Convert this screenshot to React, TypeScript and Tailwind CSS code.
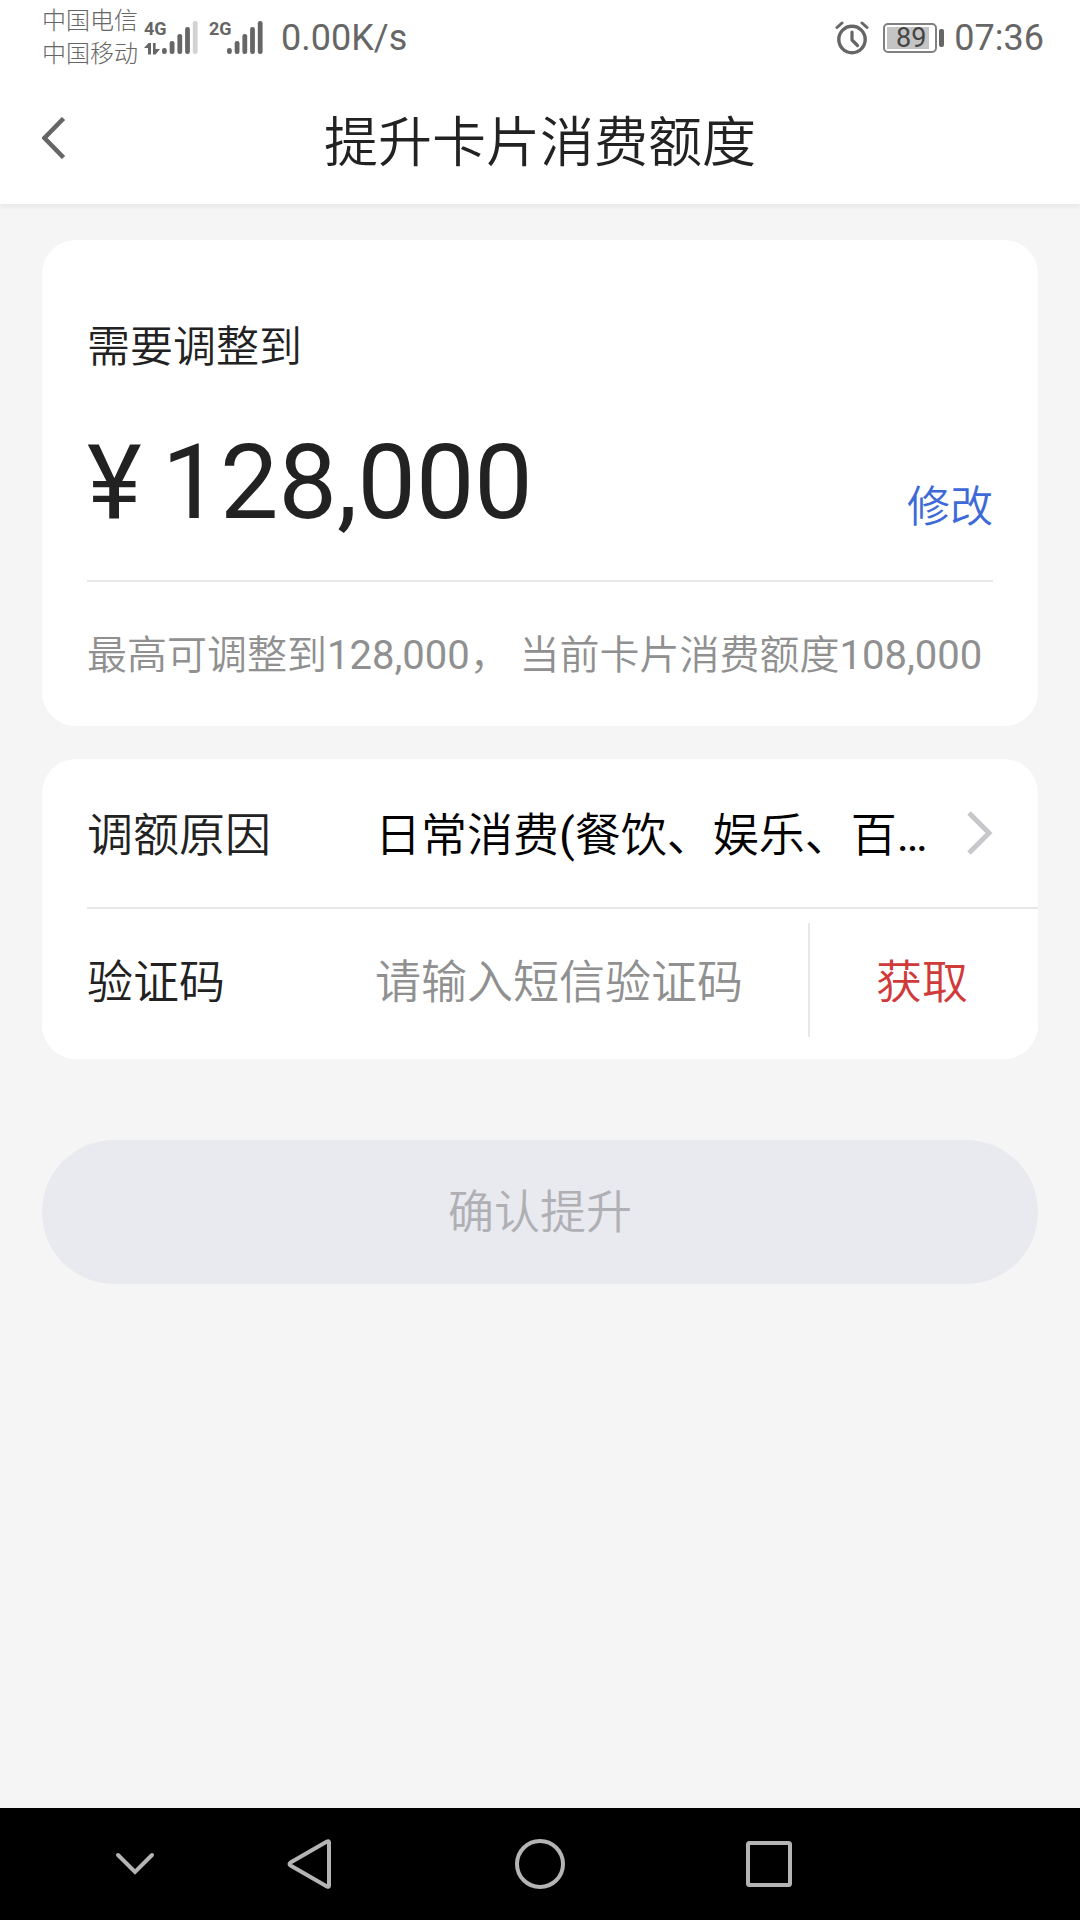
import { useState } from 'react';
import type { ReactNode } from 'react';

function Bars({ level }: { level: number }) {
  const tops = [27, 20, 13, 6, 0];
  return (
    <svg viewBox="0 0 36 34" className="h-[34px] w-[36px]" aria-hidden="true">
      {tops.map((top, i) => (
        <rect
          key={top}
          x={i * 7.7}
          y={top}
          width="4.8"
          height={33 - top}
          rx="2.2"
          fill={i < level ? '#666666' : '#d2d2d2'}
        />
      ))}
    </svg>
  );
}

function Signal({ type, level, data }: { type: string; level: number; data?: boolean }) {
  return (
    <div className="flex h-[34px]">
      <div className="-mr-1 flex w-[22px] flex-col justify-between">
        <span className="text-[18px] leading-[16px] font-bold">{type}</span>
        {data && (
          <svg viewBox="0 0 16 12" className="h-[12px] w-[16px]" aria-hidden="true">
            <path d="M0 5 4.500 0H7v11.500H4V5ZM9 0h2.600v6H16l-4.500 5.500H9Z" fill="#666666" />
          </svg>
        )}
      </div>
      <Bars level={level} />
    </div>
  );
}

function StatusBar() {
  return (
    <div className="flex h-[72px] items-center justify-between pt-1 pr-9 pl-[42px] text-[#666666]">
      <div className="flex items-center">
        <div className="text-[24px] leading-[33px] font-light">
          <p>中国电信</p>
          <p>中国移动</p>
        </div>
        <div className="ml-[6px] flex gap-[11px]">
          <Signal type="4G" level={4} data />
          <Signal type="2G" level={5} />
        </div>
        <span className="ml-[18px] text-[36px] leading-[44px]">0.00K/s</span>
      </div>
      <div className="flex items-center">
        <svg viewBox="0 0 34 34" className="mr-[14px] size-[34px]" fill="none" stroke="#666666" aria-label="闹钟">
          <circle cx="17" cy="18.500" r="13.200" strokeWidth="3.400" />
          <path d="M17 11v8l5.500 5.500" strokeWidth="3.200" strokeLinecap="round" strokeLinejoin="round" />
          <path d="M2 6.500 7 2M32 6.500 27 2" strokeWidth="3" strokeLinecap="round" />
        </svg>
        <div className="mr-[10px] flex items-center gap-[2px]">
          <div className="flex h-[30px] w-[54px] rounded-[5px] border-2 border-[#808080] p-[2px]">
            <span className="flex w-[42px] items-center justify-end bg-[#c4c4c4] pr-[3px] text-[27px] leading-[22px] text-[#444444]">
              89
            </span>
          </div>
          <span className="h-[18px] w-[5px] rounded-xs bg-[#666666]" />
        </div>
        <span className="text-[36px] leading-[44px]">07:36</span>
      </div>
    </div>
  );
}

function Header() {
  return (
    <header className="relative bg-white shadow-[0_4px_3px_rgba(0,0,0,0.04)]">
      <StatusBar />
      <div className="grid h-[132px] grid-cols-[1fr_auto_1fr] items-center px-[42px]">
        <button type="button" aria-label="返回" className="justify-self-start">
          <svg viewBox="0 0 24 42" className="h-[42px] w-[24px]" fill="none" stroke="#666666" strokeWidth="4.500">
            <path d="M21.500 1.500 2.500 21l19 19.500" />
          </svg>
        </button>
        <h1 className="pt-3 text-[54px] leading-[72px] font-[350]">提升卡片消费额度</h1>
      </div>
    </header>
  );
}

function NavButton({ label, children }: { label: string; children: ReactNode }) {
  return (
    <button type="button" aria-label={label} className="flex w-[21.25%] justify-center">
      <svg viewBox="0 0 52 52" className="size-[52px]" fill="none" stroke="#b4b4b4" strokeWidth="4">
        {children}
      </svg>
    </button>
  );
}

function NavBar() {
  return (
    <nav className="flex h-[112px] items-center bg-black">
      <div className="flex w-[18.125%] justify-end pr-[41px]">
        <button type="button" aria-label="收起">
          <svg viewBox="0 0 40 24" className="h-[24px] w-[40px]" fill="none" stroke="#b4b4b4" strokeWidth="4">
            <path d="M3 3l17 17L37 3" strokeLinecap="round" />
          </svg>
        </button>
      </div>
      <NavButton label="返回">
        <path d="M44 4.500v43Q44 49.500 42 48.500L5.500 27.500Q3.500 26 5.500 24.500L42 3.500Q44 2.500 44 4.500Z" strokeLinejoin="round" />
      </NavButton>
      <NavButton label="主页">
        <circle cx="26" cy="26" r="23" />
      </NavButton>
      <NavButton label="最近任务">
        <rect x="4" y="5" width="42" height="42" rx="1.500" />
      </NavButton>
    </nav>
  );
}

export default function App() {
  const [code, setCode] = useState('');

  return (
    <div className="flex min-h-screen flex-col bg-[#f5f5f5] font-['Roboto','Noto_Sans_CJK_SC',sans-serif] text-[#222222]" lang="zh-CN">
      <Header />
      <main className="flex flex-1 flex-col px-[42px] pt-9">
        <section className="rounded-[34px] bg-white px-[45px] pt-[77px] font-[350]">
          <h2 className="text-[43px] leading-[60px]">需要调整到</h2>
          <div className="mt-[46px] flex items-end justify-between border-b-2 border-[#e8e8e8] pb-[37px]">
            <p className="flex items-baseline gap-5 text-[104px] leading-[120px] font-normal">
              <span>¥</span>
              <span>128,000</span>
            </p>
            <button type="button" className="mb-[6px] text-[43px] leading-[60px] text-[#3d6ad6]">
              修改
            </button>
          </div>
          <p className="flex h-[144px] items-center pt-1 text-[40px] leading-[56px] whitespace-pre text-[#909090]">
            最高可调整到<span className="font-normal">128,000</span>， 当前卡片消费额度<span className="font-normal">108,000</span>
          </p>
        </section>

        <section className="mt-[33px] rounded-[34px] bg-white pb-2 pl-[45px] text-[46px] leading-[64px] font-[350]">
          <button type="button" className="flex h-[150px] w-full items-center border-b-2 border-[#e8e8e8] pr-[45px] text-left">
            <span className="w-[288px] shrink-0 pt-1">调额原因</span>
            <span className="min-w-0 flex-1 truncate pt-1 text-black">
              日常消费<span className="font-normal">(</span>餐饮、娱乐、百<span className="font-normal">…</span>
            </span>
            <svg viewBox="0 0 26 44" className="h-[44px] w-[26px] shrink-0" fill="none" stroke="#c8c8cc" strokeWidth="5">
              <path d="M2 2l20 20L2 42" />
            </svg>
          </button>
          <div className="flex h-[142px] items-center">
            <label htmlFor="code" className="w-[288px] shrink-0 pt-1">验证码</label>
            <input
              id="code"
              value={code}
              onChange={(e) => setCode(e.target.value)}
              placeholder="请输入短信验证码"
              className="min-w-0 flex-1 pt-1 outline-none placeholder:text-[#909090]"
            />
            <button type="button" className="h-[114px] w-[230px] shrink-0 border-l-2 border-[#e8e8e8] pt-1 pr-1 text-[#d03a3a]">
              获取
            </button>
          </div>
        </section>

        <button type="button" disabled className="mt-[81px] h-[144px] rounded-full bg-[#e9eaef] text-[46px] leading-[64px] font-[350] text-[#b0b0b4]">
          确认提升
        </button>
      </main>
      <NavBar />
    </div>
  );
}
